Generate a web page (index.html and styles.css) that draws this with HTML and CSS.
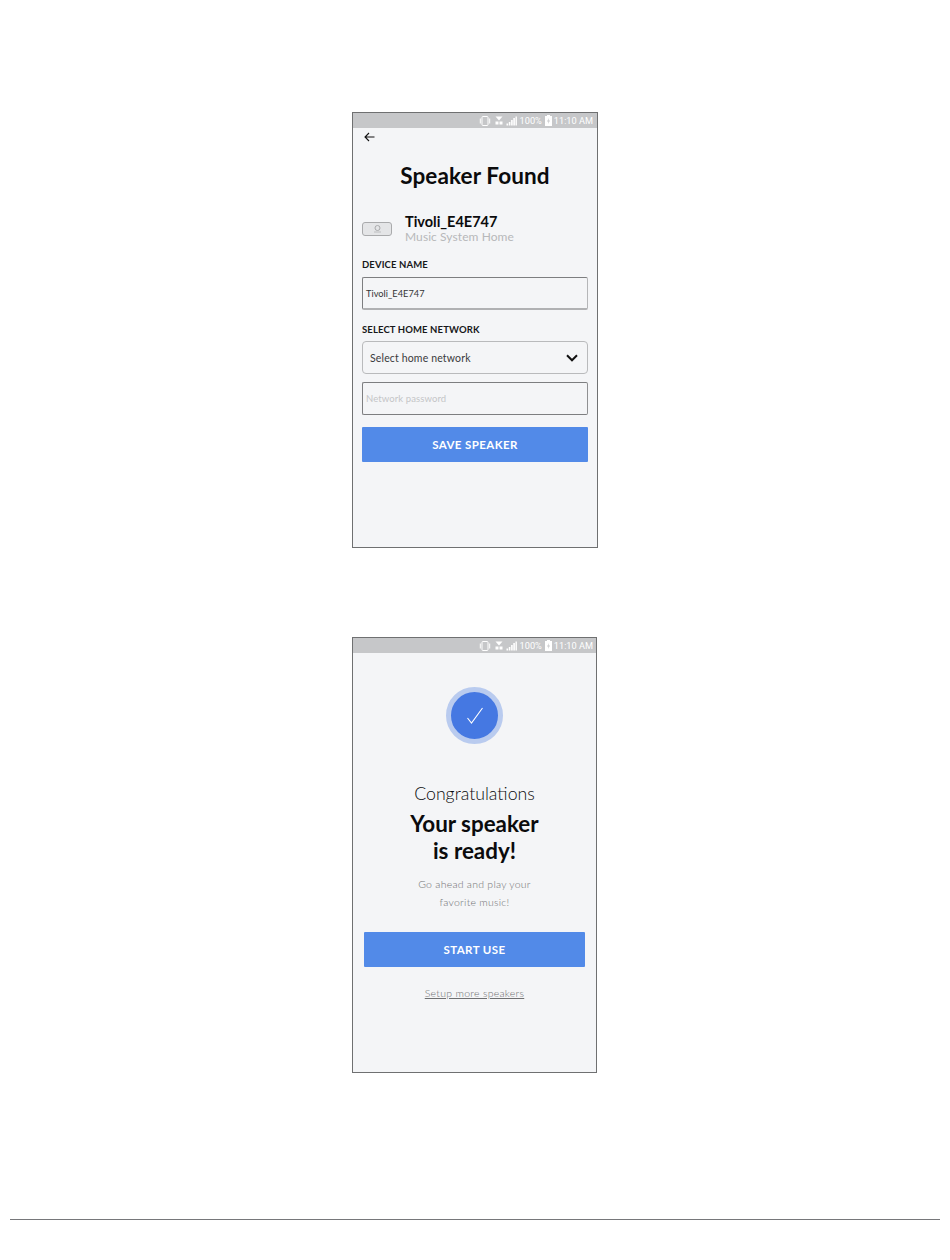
FILE: index.html
```html
<!DOCTYPE html>
<html lang="en">
<head>
<meta charset="utf-8">
<title>Speaker setup</title>
<link rel="stylesheet" href="styles.css">
</head>
<body>
<main class="page">
  <section class="phone phone-found">
    <div class="status">
      <svg class="st-icon st-vib" width="12" height="10" viewBox="0 0 12 10"><rect x="3" y="0.5" width="6" height="9" rx="1" fill="none" stroke="#fff"/><path d="M1.300 2.500v5M10.700 2.500v5" stroke="#fff"/></svg>
      <svg class="st-icon st-wifi" width="8" height="10" viewBox="0 0 8 10"><path d="M.5 .5h7L4 4.500z M.5 5.500h3v3h-3z M4.500 5.500h3v3h-3z" fill="#fff"/></svg>
      <svg class="st-icon st-signal" width="11" height="10" viewBox="0 0 11 10"><path d="M.5 7.500h1.600v2H.5zM2.800 6h1.600v3.500H2.800zM5.100 4h1.600v5.500H5.100zM7.300 2h1.600v7.500H7.300zM9.500.5h1.400v9H9.500z" fill="#fff"/></svg>
      <span class="st-text st-pct">100%</span>
      <svg class="st-icon st-batt" width="7" height="11" viewBox="0 0 7 11"><path d="M0 1h2V0h3v1h2v10H0z" fill="#fff"/><path d="M4 3 2 6.500h1.500L3 9l2-3.500H3.500z" fill="#c6c7c9"/></svg>
      <span class="st-text">11:10 AM</span>
    </div>
    <div class="back-row">
      <svg width="11" height="10" viewBox="0 0 11 10"><path d="M10.500 5H1M5 1 1 5l4 4" fill="none" stroke="#111" stroke-width="1.100"/></svg>
    </div>
    <h1 class="found-title">Speaker Found</h1>
    <div class="device">
      <div class="device-pic">
        <svg width="9" height="8" viewBox="0 0 9 8"><circle cx="4.500" cy="3" r="2.500" fill="none" stroke="#a9aaac"/><path d="M1 7h7" stroke="#bcbdbf"/></svg>
      </div>
      <div class="device-text">
        <div class="device-name">Tivoli_E4E747</div>
        <div class="device-sub">Music System Home</div>
      </div>
    </div>
    <div class="field-label label-first">DEVICE NAME</div>
    <div class="input input-value">Tivoli_E4E747</div>
    <div class="field-label label-second">SELECT HOME NETWORK</div>
    <div class="select">
      <span>Select home network</span>
      <svg width="12" height="8" viewBox="0 0 12 8"><path d="M1 1.300 6 6.300l5-5" fill="none" stroke="#111" stroke-width="2"/></svg>
    </div>
    <div class="input input-placeholder">Network password</div>
    <div class="button save">SAVE SPEAKER</div>
  </section>

  <section class="phone phone-ready">
    <div class="status">
      <svg class="st-icon st-vib" width="12" height="10" viewBox="0 0 12 10"><rect x="3" y="0.5" width="6" height="9" rx="1" fill="none" stroke="#fff"/><path d="M1.300 2.500v5M10.700 2.500v5" stroke="#fff"/></svg>
      <svg class="st-icon st-wifi" width="8" height="10" viewBox="0 0 8 10"><path d="M.5 .5h7L4 4.500z M.5 5.500h3v3h-3z M4.500 5.500h3v3h-3z" fill="#fff"/></svg>
      <svg class="st-icon st-signal" width="11" height="10" viewBox="0 0 11 10"><path d="M.5 7.500h1.600v2H.5zM2.800 6h1.600v3.500H2.800zM5.100 4h1.600v5.500H5.100zM7.300 2h1.600v7.500H7.300zM9.500.5h1.400v9H9.500z" fill="#fff"/></svg>
      <span class="st-text st-pct">100%</span>
      <svg class="st-icon st-batt" width="7" height="11" viewBox="0 0 7 11"><path d="M0 1h2V0h3v1h2v10H0z" fill="#fff"/><path d="M4 3 2 6.500h1.500L3 9l2-3.500H3.500z" fill="#c6c7c9"/></svg>
      <span class="st-text">11:10 AM</span>
    </div>
    <div class="check">
      <svg width="18" height="18" viewBox="0 0 18 18"><path d="M1.500 11 5.500 16 16.500 1" fill="none" stroke="#fff" stroke-width="1.100"/></svg>
    </div>
    <p class="congrats">Congratulations</p>
    <h1 class="ready-title">Your speaker<br>is ready!</h1>
    <p class="ready-sub">Go ahead and play your<br>favorite music!</p>
    <div class="button start">START USE</div>
    <a class="more" href="#">Setup more speakers</a>
  </section>
</main>
<footer class="footer-rule"></footer>
</body>
</html>
```

FILE: styles.css
```css
* { box-sizing: border-box; }
html, body { margin: 0; padding: 0; background: #fff; }
body { font-family: Lato, "Open Sans", sans-serif; color: #0b0b0c; height: 1260px; overflow: hidden; }
.page { padding: 112px 0 0 352px; display: flex; flex-direction: column; gap: 89px; }
.phone { height: 436px; background: #f4f5f7; border: 1px solid #6f7071; display: flex; flex-direction: column; }
.phone-found { width: 246px; }
.phone-ready { width: 245px; align-items: center; }
.status { align-self: stretch; height: 15px; flex: none; background: #c6c7c9; display: flex; align-items: center; justify-content: flex-end; padding-right: 4px; color: #fff; }
.phone-ready .status { padding-right: 3px; }
.st-icon { flex: none; }
.st-wifi { margin-left: 4px; }
.st-signal { margin-left: 3px; }
.st-pct { margin-left: 3px; }
.st-batt { margin: 0 2px 0 3px; }
.st-text { font-family: Roboto, sans-serif; font-size: 9.200px; line-height: 15px; letter-spacing: 0; }
.back-row { height: 17px; padding: 4px 0 0 11px; display: flex; }
.found-title { margin: 16px 0 0; font-size: 22.500px; line-height: 30px; font-weight: 700; text-align: center; letter-spacing: 0.120px; }
.device { display: flex; align-items: center; margin: 23px 0 0 9px; gap: 13px; }
.device-pic { width: 30px; height: 14px; background: #e4e5e7; border: 1px solid #a9aaac; border-radius: 3px; display: flex; align-items: center; justify-content: center; }
.device-name { font-size: 14.500px; line-height: 16px; font-weight: 700; }
.device-sub { font-size: 12px; line-height: 14px; color: #b7b8ba; letter-spacing: 0.080px; }
.field-label { margin-left: 9px; font-size: 9.500px; line-height: 12px; font-weight: 700; color: #17181a; letter-spacing: 0.120px; }
.label-first { margin-top: 15px; }
.label-second { margin-top: 14px; }
.input { margin: 6px 9px 0 9px; height: 33px; border: 1px solid #b5b6b8; border-top-color: #7d7e80; border-left-color: #7d7e80; border-radius: 2px; padding-left: 3px; display: flex; align-items: center; font-size: 9.200px; letter-spacing: 0.050px; }
.input-value { color: #333; border-bottom: 2px solid #b0b1b3; }
.input-placeholder { margin-top: 8px; color: #c4c5c7; border-bottom-color: #7d7e80; border-right-color: #8f9092; font-size: 9.500px; letter-spacing: 0.100px; }
.select { margin: 5px 9px 0 9px; height: 33px; border: 1px solid #b9babc; border-radius: 4px; padding: 0 9px 0 7px; display: flex; align-items: center; justify-content: space-between; font-size: 10.500px; color: #3a3b3d; letter-spacing: 0.150px; }
.button { background: #528ae8; color: #fff; display: flex; align-items: center; justify-content: center; height: 35px; font-size: 11.500px; font-weight: 700; letter-spacing: 0.400px; border-radius: 1px; }
.save { margin: 12px 9px 0 9px; }
.check { width: 57px; height: 57px; margin-top: 34px; flex: none; border-radius: 50%; background: #4578e2; border: 5px solid #b9cbef; display: flex; align-items: center; justify-content: center; }
.congrats { margin: 38px 0 0; font-size: 17.700px; line-height: 24px; font-weight: 300; }
.ready-title { margin: 4px 0 0; font-size: 22.400px; line-height: 27px; font-weight: 700; text-align: center; }
.ready-sub { margin: 12px 0 0; font-size: 10.500px; line-height: 17.500px; font-weight: 300; color: #6f7072; text-align: center; letter-spacing: 0.250px; }
.start { width: 221px; margin-top: 21px; }
.more { margin-top: 19px; font-size: 10.500px; line-height: 14px; color: #6f7072; text-decoration: underline; font-weight: 300; letter-spacing: 0.280px; }
.footer-rule { position: absolute; left: 10px; top: 1219px; width: 930px; height: 1px; background: #76777a; }
```
